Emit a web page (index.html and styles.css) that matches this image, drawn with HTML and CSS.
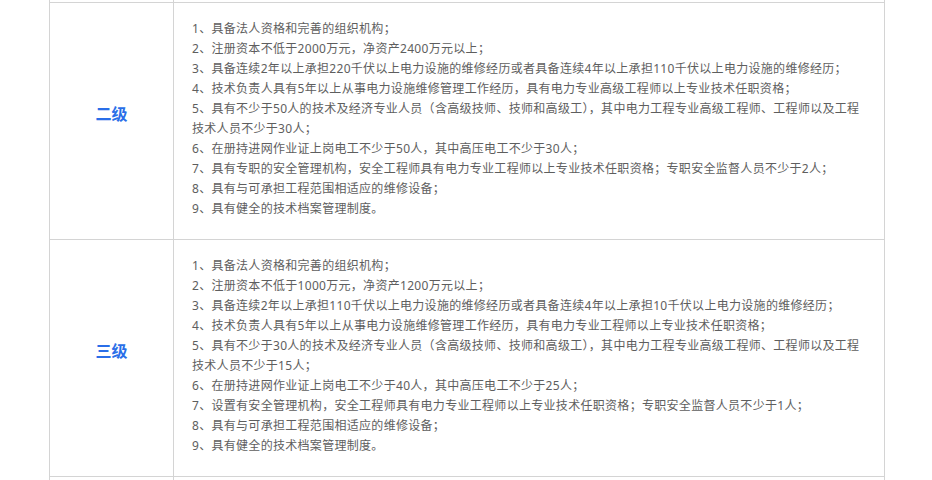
FILE: index.html
```html
<!DOCTYPE html>
<html>
	<head>
		<meta charset="utf-8" />
		<title>承装（修、试）电力设施许可证等级条件</title>
		<link rel="stylesheet" href="styles.css">
	</head>
	<body>
		<div class="grade-table">
			<!--上一行的末尾-->
			<div class="cell cell-tail"></div>
			<div class="cell cell-tail"></div>

			<div class="cell grade-name">二级</div>
			<div class="cell grade-req">
				<p>1、具备法人资格和完善的组织机构；</p>
				<p>2、注册资本不低于2000万元，净资产2400万元以上；</p>
				<p>3、具备连续2年以上承担220千伏以上电力设施的维修经历或者具备连续4年以上承担110千伏以上电力设施的维修经历；</p>
				<p>4、技术负责人具有5年以上从事电力设施维修管理工作经历，具有电力专业高级工程师以上专业技术任职资格；</p>
				<p>5、具有不少于50人的技术及经济专业人员（含高级技师、技师和高级工），其中电力工程专业高级工程师、工程师以及工程技术人员不少于30人；</p>
				<p>6、在册持进网作业证上岗电工不少于50人，其中高压电工不少于30人；</p>
				<p>7、具有专职的安全管理机构，安全工程师具有电力专业工程师以上专业技术任职资格；专职安全监督人员不少于2人；</p>
				<p>8、具有与可承担工程范围相适应的维修设备；</p>
				<p>9、具有健全的技术档案管理制度。</p>
			</div>

			<div class="cell grade-name">三级</div>
			<div class="cell grade-req">
				<p>1、具备法人资格和完善的组织机构；</p>
				<p>2、注册资本不低于1000万元，净资产1200万元以上；</p>
				<p>3、具备连续2年以上承担110千伏以上电力设施的维修经历或者具备连续4年以上承担10千伏以上电力设施的维修经历；</p>
				<p>4、技术负责人具有5年以上从事电力设施维修管理工作经历，具有电力专业工程师以上专业技术任职资格；</p>
				<p>5、具有不少于30人的技术及经济专业人员（含高级技师、技师和高级工），其中电力工程专业高级工程师、工程师以及工程技术人员不少于15人；</p>
				<p>6、在册持进网作业证上岗电工不少于40人，其中高压电工不少于25人；</p>
				<p>7、设置有安全管理机构，安全工程师具有电力专业工程师以上专业技术任职资格；专职安全监督人员不少于1人；</p>
				<p>8、具有与可承担工程范围相适应的维修设备；</p>
				<p>9、具有健全的技术档案管理制度。</p>
			</div>

			<!--下一行的开头-->
			<div class="cell cell-head"></div>
			<div class="cell cell-head"></div>
		</div>
	</body>
</html>
```

FILE: styles.css
```css
* {
	margin: 0;
	padding: 0;
}

body {
	background: #fff;
	font-family: "Noto Sans", "Noto Sans CJK SC", sans-serif;
	font-size: 12px;
	color: #5e5e5e;
}

.grade-table {
	width: 835px;
	margin-left: 49px;
	display: grid;
	grid-template-columns: 124px 1fr;
	border-left: 1px solid #d4d4d4;
}

.cell {
	border-right: 1px solid #d4d4d4;
	border-bottom: 1px solid #d4d4d4;
}

.cell-tail {
	height: 2px;
}

.cell-head {
	height: 10px;
	border-bottom: 0;
}

.grade-name {
	display: flex;
	align-items: center;
	justify-content: center;
	padding-bottom: 16px;
	font-family: "Noto Sans CJK SC", sans-serif;
	font-size: 16px;
	font-weight: bold;
	color: #2a6ee8;
}

.grade-req {
	padding: 16px 22px 20px 18px;
	line-height: 20px;
	letter-spacing: 0.3px;
}
```
